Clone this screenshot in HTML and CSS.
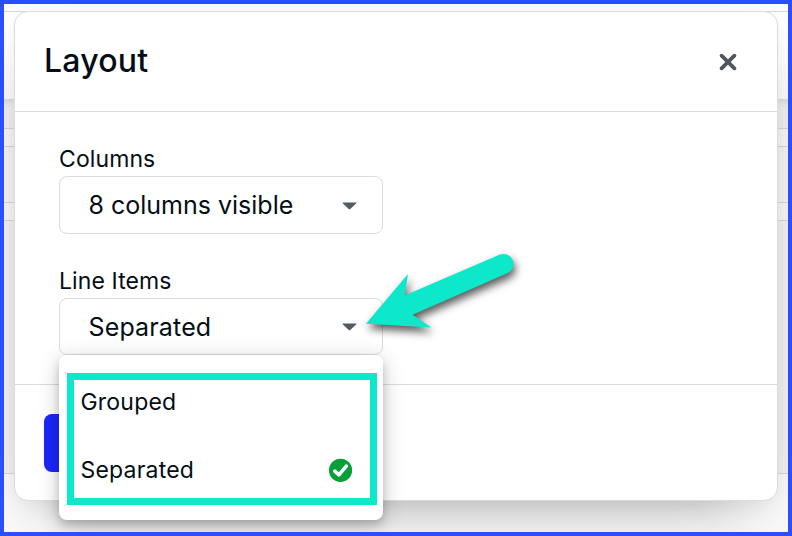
FILE: index.html
```html
<!DOCTYPE html>
<html lang="en">
<head>
<meta charset="utf-8">
<title>Layout</title>
<link rel="stylesheet" href="styles.css">
</head>
<body>
<main class="frame">
  <div class="backdrop">
    <div class="strip strip-top"></div>
    <div class="strip strip-bar"></div>
    <div class="strip strip-gap"></div>
    <div class="strip strip-head"></div>
    <div class="strip strip-row"></div>
    <div class="strip strip-head"></div>
    <div class="strip strip-content"></div>
    <div class="strip strip-bottom"></div>
  </div>
  <section class="modal">
    <header class="modal-header">
      <h1 class="title">Layout</h1>
      <button class="close" aria-label="Close">
        <svg width="18" height="18" viewBox="0 0 18 18"><path d="M2.600 2.600 15.400 15.400M15.400 2.600 2.600 15.400" stroke="#50545c" stroke-width="3.7" stroke-linecap="round"/></svg>
      </button>
    </header>
    <div class="modal-body">
      <div class="field">
        <div class="label">Columns</div>
        <div class="select"><span>8 columns visible</span><svg class="caret" width="15" height="8" viewBox="0 0 14 8" preserveAspectRatio="none"><path d="M1 .5H13Q14 .7 13.4 1.3L7.7 6.900Q7 7.600 6.300 6.900L.6 1.300Q0 .7 1 .5Z" fill="#555960"/></svg></div>
      </div>
      <div class="field">
        <div class="label">Line Items</div>
        <div class="select select-open"><span>Separated</span><svg class="caret" width="15" height="8" viewBox="0 0 14 8" preserveAspectRatio="none"><path d="M1 .5H13Q14 .7 13.4 1.3L7.7 6.900Q7 7.600 6.300 6.900L.6 1.300Q0 .7 1 .5Z" fill="#555960"/></svg></div>
        <div class="menu">
          <div class="highlight">
            <div class="option">Grouped</div>
            <div class="option"><span>Separated</span>
              <svg class="check" width="24" height="24" viewBox="0 0 24 24"><circle cx="11.500" cy="12.300" r="11.600" fill="#069f38"/><path d="M5.800 13.200 9.900 16.900 17.300 8.200" fill="none" stroke="#fff" stroke-width="3.6" stroke-linecap="round" stroke-linejoin="round"/></svg>
            </div>
          </div>
        </div>
      </div>
    </div>
    <footer class="modal-footer"><div class="primary"></div></footer>
  </section>
  <svg class="arrow" width="170" height="110" viewBox="350 240 170 110"><path d="M366 323.700 408 274 404.600 295.600 500 254.600A10 10 0 0 1 507.800 273L412.600 314.700 431.200 327.500Z" fill="#0ce8c9"/></svg>
</main>
</body>
</html>
```
FILE: styles.css
```css
* { box-sizing: border-box; }
body { margin: 0; font-family: Inter, "Liberation Sans", sans-serif; color: #030d15; }
.frame {
  position: relative;
  width: 792px;
  height: 536px;
  padding: 7px 10px;
  border: 4px solid #2b4eff;
  overflow: hidden;
  background: #fff;
}
.backdrop { position: absolute; inset: 0; display: flex; flex-direction: column; }
.strip { border-bottom: 1px solid #d6d6d6; flex: none; }
.strip-top { height: 8px; background: #fcfcfc; }
.strip-bar { height: 87px; border: 0; background: linear-gradient(#fff, #f9f9f9); }
.strip-gap { height: 30px; background: linear-gradient(#dadada, #e9e9e9 5px, #efefef 9px, #efefef); }
.strip-head { height: 18px; background: #f6f6f6; }
.strip-row { height: 56px; background: #f4f4f4; }
.strip-content { height: 253px; background: #f1f1f1; }
.strip-bottom { flex: 1; border: 0; background: #f9f9f9; }
.modal {
  position: relative;
  width: 764px;
  height: 490px;
  border: 1px solid #dbdcdd;
  border-radius: 14px;
  background: #fff;
  box-shadow: 0 32px 60px -34px rgba(0,0,0,.36), 0 6px 20px rgba(0,0,0,.04);
  display: flex;
  flex-direction: column;
}
.modal-header {
  height: 100px;
  flex: none;
  border-bottom: 1px solid #dbdcdd;
  padding: 0 40.500px 2px 29px;
  display: flex;
  align-items: center;
  justify-content: space-between;
}
.title { margin: 0; font-size: 32px; line-height: 40px; font-weight: 500; letter-spacing: .2px; }
.close { display: flex; padding: 0; border: 0; background: none; margin-top: 3px; }
.modal-body { height: 273px; flex: none; padding: 32px 44px 0; border-bottom: 1px solid #dbdcdd; }
.field { position: relative; width: 324px; height: 122px; }
.label { height: 32px; line-height: 30px; font-size: 23px; letter-spacing: .1px; }
.select {
  height: 58px;
  padding: 0 25px 0 28.500px;
  border: 1px solid #dbdcdd;
  border-radius: 8px;
  display: flex;
  align-items: center;
  justify-content: space-between;
  font-size: 25px;
  letter-spacing: 0;
}
.caret { position: relative; top: 1px; }
.select-open .caret { top: 0; }
.select-open { height: 57px; letter-spacing: .15px; }
.menu {
  position: absolute;
  z-index: 2;
  top: 89px;
  left: 0;
  width: 324px;
  height: 165px;
  padding: 18px 6px 0 8px;
  border-radius: 8px;
  background: #fff;
  box-shadow: 0 4px 22px rgba(0,0,0,.2), 0 5px 8px rgba(0,0,0,.16);
}
.highlight { height: 132px; border: 7px solid #0ce8c9; padding: 0 17.500px 0 6.500px; }
.option { height: 68px; margin-top: -12px; display: flex; align-items: center; justify-content: space-between; font-size: 23px; letter-spacing: .2px; }
.option + .option { margin-top: 0; }
.modal-footer { flex: 1; padding: 29px; }
.primary { width: 100px; height: 58px; border-radius: 8px; background: #1c27fb; }
.arrow { position: absolute; z-index: 3; left: 346px; top: 236px; overflow: visible; filter: drop-shadow(2px 5px 4px rgba(0,0,0,.65)); }
```
